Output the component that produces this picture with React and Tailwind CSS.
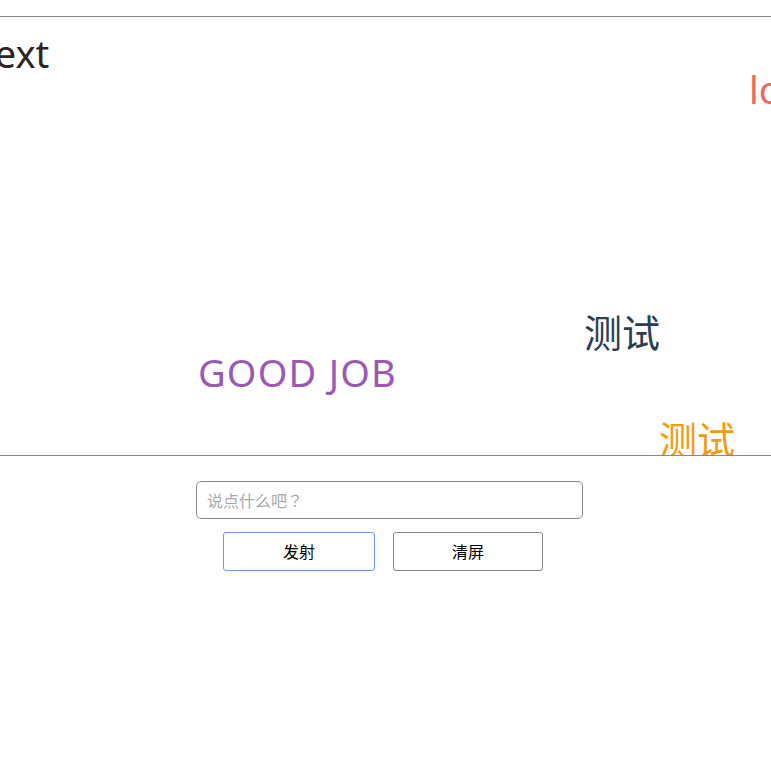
import { useState } from "react";

// Bullet comments drifting across the screen — positions are the content itself
const bullets = [
  { text: "text", left: -19, top: 17, color: "text-[#2d2424]", extra: "" },
  { text: "lo", left: 749, top: 53, color: "text-[#ef6a5c]", extra: "" },
  { text: "测试", left: 584, top: 296, color: "text-[#2c3e50]", extra: "" },
  { text: "GOOD JOB", left: 198, top: 336, color: "text-[#9b59b6]", extra: "tracking-[1.2px]" },
  { text: "测试", left: 659, top: 403, color: "text-[#f39c12]", extra: "" },
];

export default function App() {
  const [value, setValue] = useState("");

  return (
    <div className="min-h-[771px] bg-white font-['Noto_Sans','Noto_Sans_CJK_SC',sans-serif]">
      {/* Danmaku screen */}
      <div className="relative mt-4 h-[440px] overflow-hidden border-y border-[#8f8585]">
        {bullets.map((b, i) => (
          <span
            key={i}
            className={`absolute whitespace-nowrap text-[38px] leading-none ${b.color} ${b.extra}`}
            style={{ left: b.left, top: b.top }}
          >
            {b.text}
          </span>
        ))}
      </div>

      {/* Controls */}
      <div className="flex flex-col items-center pt-[25px]">
        <input
          value={value}
          onChange={(e) => setValue(e.target.value)}
          placeholder="说点什么吧？"
          className="ml-[8px] h-[38px] w-[387px] rounded-[5px] border border-[#8f8585] px-[10px] font-['Noto_Sans_CJK_TC',sans-serif] text-[16px] text-black placeholder:text-[#aaa] outline-none"
        />
        <div className="mt-[13px] flex gap-[18px] -ml-[5px]">
          <button
            type="button"
            className="h-[39px] w-[152px] rounded-[3px] border border-[#6d98e8] text-[16px] text-black"
          >
            发射
          </button>
          <button
            type="button"
            className="h-[39px] w-[150px] rounded-[3px] border border-[#8f8585] text-[16px] text-black"
          >
            清屏
          </button>
        </div>
      </div>
    </div>
  );
}
